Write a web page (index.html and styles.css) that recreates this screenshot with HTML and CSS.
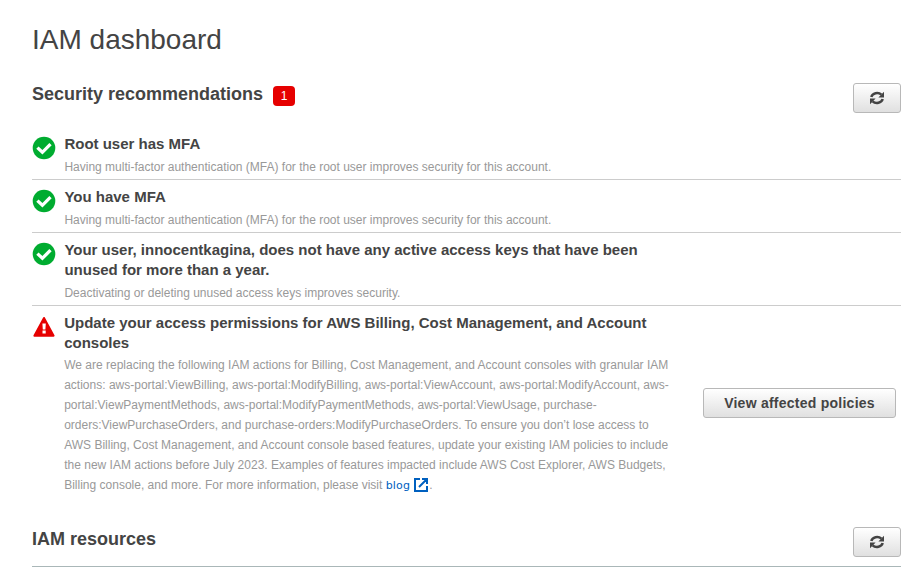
FILE: index.html
```html
<!DOCTYPE html>
<html lang="en">
<head>
<meta charset="utf-8">
<title>IAM dashboard</title>
<link rel="stylesheet" href="styles.css">
</head>
<body>
<svg class="defs" aria-hidden="true">
  <symbol id="refresh" viewBox="0 0 14 14"><path d="M1.300 6A5.900 5.100 0 0 1 11.400 3.700M12.700 8A5.900 5.100 0 0 1 2.600 10.300" fill="none" stroke="#444" stroke-width="2.500"/><path d="M14 .8v5.600H8.400zM0 13.200V7.600h5.600z" fill="#444"/></symbol>
  <symbol id="check" viewBox="0 0 24 24"><circle cx="12" cy="12" r="11.300" fill="#00ac30"/><path d="M5.400 11.600l5 4.700 8.100-8.100" fill="none" stroke="#fff" stroke-width="3.300"/></symbol>
</svg>
<main class="page">
  <h1>IAM dashboard</h1>
  <header class="section-head">
    <h2>Security recommendations</h2><span class="badge">1</span>
    <button class="btn refresh" aria-label="Refresh"><svg><use href="#refresh"/></svg></button>
  </header>
  <ul class="list">
    <li class="item">
      <svg class="status"><use href="#check"/></svg>
      <div class="body"><h3>Root user has MFA</h3><p>Having multi-factor authentication (MFA) for the root user improves security for this account.</p></div>
    </li>
    <li class="item">
      <svg class="status"><use href="#check"/></svg>
      <div class="body"><h3>You have MFA</h3><p>Having multi-factor authentication (MFA) for the root user improves security for this account.</p></div>
    </li>
    <li class="item">
      <svg class="status"><use href="#check"/></svg>
      <div class="body"><h3>Your user, innocentkagina, does not have any active access keys that have been<br>unused for more than a year.</h3><p>Deactivating or deleting unused access keys improves security.</p></div>
    </li>
    <li class="item alert">
      <svg class="status" viewBox="0 0 24 24"><path d="M12 3L21.600 20.700H2.400z" fill="#e60000" stroke="#e60000" stroke-width="2" stroke-linejoin="round"/><path d="M10.400 8.500h3.400l-.4 6h-2.600zM10.500 15.600h3.200v3h-3.200z" fill="#fff"/></svg>
      <div class="body"><h3>Update your access permissions for AWS Billing, Cost Management, and Account<br>consoles</h3>
      <p>We are replacing the following IAM actions for Billing, Cost Management, and Account consoles with granular IAM<br>actions: aws-portal:ViewBilling, aws-portal:ModifyBilling, aws-portal:ViewAccount, aws-portal:ModifyAccount, aws-<br>portal:ViewPaymentMethods, aws-portal:ModifyPaymentMethods, aws-portal:ViewUsage, purchase-<br>orders:ViewPurchaseOrders, and purchase-orders:ModifyPurchaseOrders. To ensure you don’t lose access to<br>AWS Billing, Cost Management, and Account console based features, update your existing IAM policies to include<br>the new IAM actions before July 2023. Examples of features impacted include AWS Cost Explorer, AWS Budgets,<br>Billing console, and more. For more information, please visit <a>blog<svg class="ext" viewBox="0 0 14 14"><path d="M6 1H1v12h12V8M8 1h5v5M13 1L5 9" fill="none" stroke="#0060bf" stroke-width="2"/></svg></a>.</p></div>
      <button class="btn view">View affected policies</button>
    </li>
  </ul>
  <header class="section-head resources">
    <h2>IAM resources</h2>
    <button class="btn refresh" aria-label="Refresh"><svg><use href="#refresh"/></svg></button>
  </header>
</main>
</body>
</html>
```
FILE: styles.css
```css
* { box-sizing: border-box; margin: 0; padding: 0; }
body { background: #fff; color: #444; font-family: "Liberation Sans", Arial, sans-serif; overflow: hidden; }
.defs { display: none; }
.page { padding: 24px 10px 0 32px; }
h1 { font-size: 28px; line-height: 32px; font-weight: 400; }
.section-head { display: flex; align-items: flex-start; margin-top: 27px; height: 44px; }
h2 { font-size: 18px; line-height: 22px; }
.badge { margin: 3px 0 0 10px; width: 22px; height: 20px; border-radius: 4px; background: #e60000; color: #fff; font-size: 12px; line-height: 20px; text-align: center; }
.btn { height: 30px; border: 1px solid #b8b8b8; border-radius: 3px; background: linear-gradient(#fff, #e0e0e0); color: #444; font: bold 14px "Liberation Sans", Arial, sans-serif; display: flex; align-items: center; justify-content: center; white-space: nowrap; }
.refresh { width: 48px; margin-left: auto; }
.refresh svg { width: 14px; height: 14px; }
.list { list-style: none; }
.item { display: flex; padding: 8px 0 2px; border-bottom: 1px solid #ccc; }
.status { width: 24px; height: 24px; flex: none; margin-top: 1px; }
.body { margin: -1px 0 0 8.400px; white-space: nowrap; }
h3 { font-size: 15px; line-height: 20px; }
.item p { margin-top: 3px; font-size: 12px; line-height: 20px; color: #999; }
.item.alert { border: 0; padding-bottom: 0; }
.alert .body { margin-left: 8.200px; }
.alert p { margin-top: 2px; }
.item a { color: #0060bf; font-family: "DejaVu Sans", sans-serif; font-size: 11px; letter-spacing: .2px; }
.ext { width: 14px; height: 14px; margin: 0 1px 0 4px; vertical-align: -3px; }
.view { width: 193px; margin: 74px 5px 0 auto; letter-spacing: .25px; }
.resources { margin-top: 31px; height: 40px; border-bottom: 1px solid #aab7b8; }
.resources h2 { margin-top: 1px; }
```
